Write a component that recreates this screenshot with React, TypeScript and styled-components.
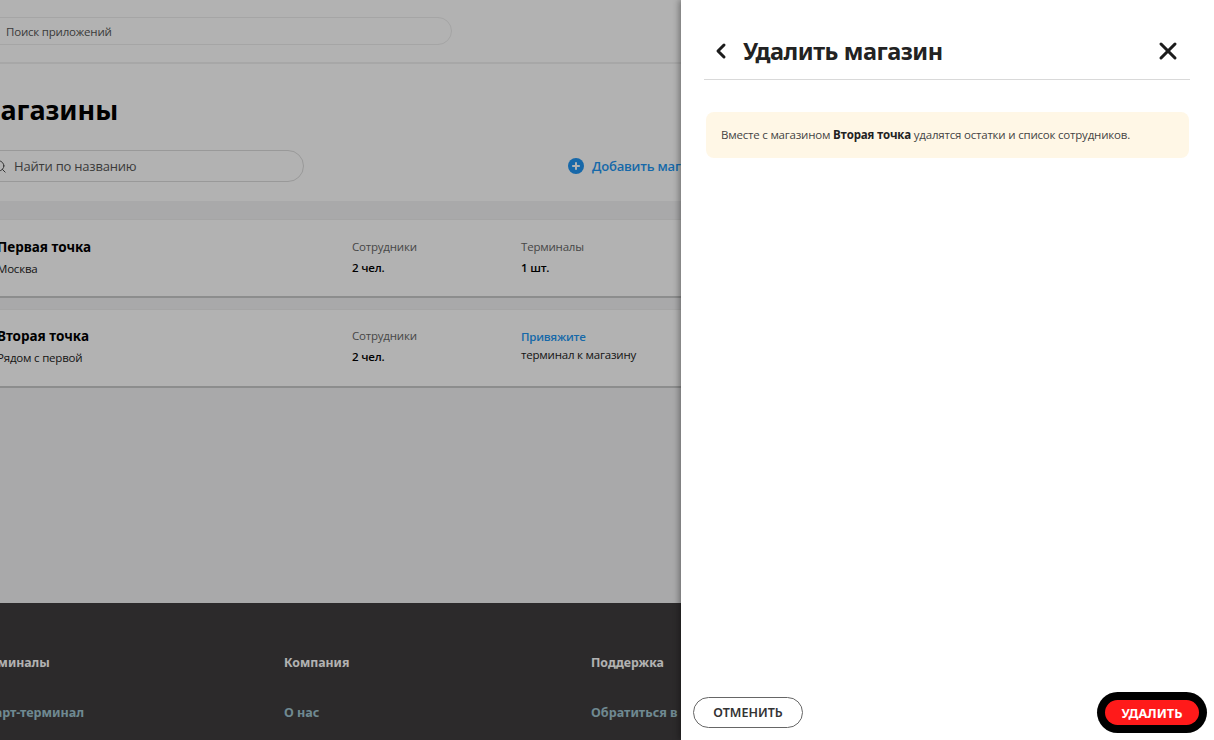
import { FC } from 'react'
import styled, { createGlobalStyle } from 'styled-components'
import { ChevronLeft, Search, X } from 'lucide-react'

const shops = [
  { name: 'Первая точка', city: 'Москва', staff: '2 чел.', terminals: '1 шт.' },
  { name: 'Вторая точка', city: 'Рядом с первой', staff: '2 чел.', terminals: null }
]

const footerColumns = [
  { title: 'Терминалы', link: 'Смарт-терминал', width: '308px' },
  { title: 'Компания', link: 'О нас', width: '307px' },
  { title: 'Поддержка', link: 'Обратиться в поддержку', width: '300px' }
]

const App: FC = () => (
  <Screen>
    <GlobalStyle />
    <Page>
      <TopBar>
        <AppSearch>Поиск приложений</AppSearch>
      </TopBar>
      <Intro>
        <PageTitle>Магазины</PageTitle>
        <Tools>
          <ShopSearch>
            <Search size={15} strokeWidth={1.6} color="#4d4d4d" />
            Найти по названию
          </ShopSearch>
          <AddLink>
            <svg width="16" height="16" viewBox="0 0 16 16">
              <circle cx="8" cy="8" r="8" fill="#2196f3" />
              <path d="M8 4.2v7.6M4.2 8h7.6" stroke="#fff" strokeWidth="2" />
            </svg>
            Добавить магазин
          </AddLink>
        </Tools>
      </Intro>
      <ShopList>
        {shops.map((shop) => (
          <ShopCard key={shop.name}>
            <ShopInfo>
              <ShopName>{shop.name}</ShopName>
              <ShopCity>{shop.city}</ShopCity>
            </ShopInfo>
            <Stat>
              <StatLabel>Сотрудники</StatLabel>
              <StatValue>{shop.staff}</StatValue>
            </Stat>
            {shop.terminals ? (
              <Stat>
                <StatLabel>Терминалы</StatLabel>
                <StatValue>{shop.terminals}</StatValue>
              </Stat>
            ) : (
              <Stat>
                <BindLink>Привяжите</BindLink>
                <BindNote>терминал к магазину</BindNote>
              </Stat>
            )}
          </ShopCard>
        ))}
      </ShopList>
      <Footer>
        {footerColumns.map((column) => (
          <FooterColumn key={column.title} $width={column.width}>
            <FooterTitle>{column.title}</FooterTitle>
            <FooterLink>{column.link}</FooterLink>
          </FooterColumn>
        ))}
      </Footer>
    </Page>
    <Overlay />
    <Panel>
      <PanelHeader>
        <ChevronLeft size={24} strokeWidth={3} color="#1c1c1c" />
        <PanelTitle>Удалить магазин</PanelTitle>
        <CloseButton>
          <X size={28} strokeWidth={2.6} color="#1c1c1c" />
        </CloseButton>
      </PanelHeader>
      <Notice>
        Вместе с магазином <b>Вторая точка</b> удалятся остатки и список сотрудников.
      </Notice>
      <PanelFooter>
        <CancelButton>ОТМЕНИТЬ</CancelButton>
        <DeleteButton>УДАЛИТЬ</DeleteButton>
      </PanelFooter>
    </Panel>
  </Screen>
)

const GlobalStyle = createGlobalStyle`
  html, body {
    margin: 0;
    height: 100%;
    overflow: hidden;
  }

  body {
    font-family: "Open Sans", "Noto Sans", sans-serif;
    letter-spacing: -0.2px;
    color: #000;
  }

  * {
    box-sizing: border-box;
  }
`

const Screen = styled.div`
  position: relative;
  width: 1214px;
  height: 740px;
  overflow: hidden;
`

const Page = styled.div`
  display: flex;
  flex-direction: column;
  width: 1500px;
  height: 740px;
  margin-left: -20px;
  background: #fff;
`

const TopBar = styled.header`
  height: 64px;
  padding-top: 17px;
  border-bottom: 2px solid #f0f0f0;
`

const AppSearch = styled.div`
  display: flex;
  align-items: center;
  width: 472px;
  height: 28px;
  padding-left: 25px;
  border: 1px solid #ececec;
  border-radius: 14px;
  font-size: 11.5px;
  color: #555;
`

const Intro = styled.section`
  height: 137px;
  padding-top: 28px;
`

const PageTitle = styled.h1`
  margin: 0 0 0 -5px;
  font-family: "Noto Sans", "Open Sans", sans-serif;
  font-size: 27px;
  font-weight: 700;
  line-height: 36px;
  letter-spacing: 0;
  color: #000;
`

const Tools = styled.div`
  display: flex;
  align-items: center;
  margin-top: 22px;
`

const ShopSearch = styled.div`
  display: flex;
  align-items: center;
  gap: 7px;
  width: 324px;
  height: 32px;
  padding-left: 11px;
  border: 1px solid #dcdcdc;
  border-radius: 16px;
  font-size: 13px;
  color: #555;
`

const AddLink = styled.div`
  display: flex;
  align-items: center;
  gap: 8px;
  margin-left: 264px;
  font-size: 13px;
  font-weight: 600;
  color: #2196f3;
  white-space: nowrap;
`

const ShopList = styled.section`
  flex: 1;
  display: flex;
  flex-direction: column;
  gap: 11px;
  padding-top: 18px;
  background: #f2f3f4;
`

const ShopCard = styled.article`
  display: flex;
  height: 79px;
  padding: 17px 0 0 17px;
  background: #fff;
  border-top: 1px solid #eceded;
  border-bottom: 2px solid #c9caca;

  & + & {
    padding-top: 16px;
  }
`

const ShopInfo = styled.div`
  width: 355px;
`

const ShopName = styled.div`
  font-family: "Noto Sans", "Open Sans", sans-serif;
  font-size: 13.5px;
  font-weight: 700;
  line-height: 20px;
  letter-spacing: 0;
`

const ShopCity = styled.div`
  margin-top: 3px;
  font-size: 11.5px;
  line-height: 18px;
  color: #222;
`

const Stat = styled.div`
  width: 169px;
  font-size: 11.5px;
  line-height: 18px;
`

const StatLabel = styled.div`
  margin-top: 1px;
  color: #666;
`

const StatValue = styled.div`
  margin-top: 3px;
  font-weight: 600;
  color: #000;
`

const BindLink = styled.div`
  margin-top: 2px;
  font-weight: 600;
  color: #2196f3;
`

const BindNote = styled.div`
  color: #222;
`

const Footer = styled.footer`
  display: flex;
  height: 137px;
  padding-top: 50px;
  background: #3f3d3e;
  font-family: "Noto Sans", "Open Sans", sans-serif;
  font-size: 12.3px;
  font-weight: 700;
  letter-spacing: 0;
`

const FooterColumn = styled.div<{ $width: string }>`
  flex: none;
  width: ${({ $width }) => $width};

  &:first-child {
    margin-left: -4px;
  }
`

const FooterTitle = styled.div`
  line-height: 20px;
  color: #fff;
`

const FooterLink = styled.div`
  margin-top: 30px;
  font-size: 12.6px;
  line-height: 20px;
  color: #a0c4d0;
  white-space: nowrap;
`

const Overlay = styled.div`
  position: absolute;
  inset: 0;
  background: rgba(0, 0, 0, 0.3);
`

const Panel = styled.aside`
  position: absolute;
  top: 0;
  right: 0;
  bottom: 0;
  display: flex;
  flex-direction: column;
  width: 533px;
  background: #fff;
  box-shadow: -2px 0 6px rgba(0, 0, 0, 0.35);
`

const PanelHeader = styled.div`
  display: flex;
  align-items: center;
  height: 80px;
  margin: 0 24px 0 23px;
  padding: 24px 8px 1px 5px;
  border-bottom: 1px solid #d9d9d9;
`

const PanelTitle = styled.h2`
  margin: 0 0 0 10px;
  font-family: "Noto Sans", "Open Sans", sans-serif;
  font-size: 23.5px;
  font-weight: 700;
  letter-spacing: -0.45px;
  color: #222;
`

const CloseButton = styled.div`
  display: flex;
  margin-left: auto;
`

const Notice = styled.div`
  height: 46px;
  margin: 32px 25px 0;
  padding: 0 15px;
  background: #fff7e6;
  border-radius: 8px;
  font-size: 11.5px;
  line-height: 46px;
  color: #444;

  b {
    font-weight: 700;
    color: #222;
  }
`

const PanelFooter = styled.div`
  display: flex;
  align-items: center;
  justify-content: space-between;
  margin-top: auto;
  padding: 0 15px 12px 12px;
`

const CancelButton = styled.div`
  display: flex;
  align-items: center;
  justify-content: center;
  width: 110px;
  height: 31px;
  border: 1px solid #666;
  border-radius: 16px;
  font-family: "Noto Sans", "Open Sans", sans-serif;
  font-size: 12.5px;
  font-weight: 600;
  letter-spacing: 0;
  color: #333;
`

const DeleteButton = styled.div`
  display: flex;
  align-items: center;
  justify-content: center;
  width: 94px;
  height: 25px;
  border-radius: 13px;
  background: #ff1a1a;
  box-shadow: 0 0 0 8px #000;
  font-family: "Noto Sans", "Open Sans", sans-serif;
  font-size: 12.8px;
  font-weight: 700;
  letter-spacing: 0;
  color: #fff;
`

export default App
